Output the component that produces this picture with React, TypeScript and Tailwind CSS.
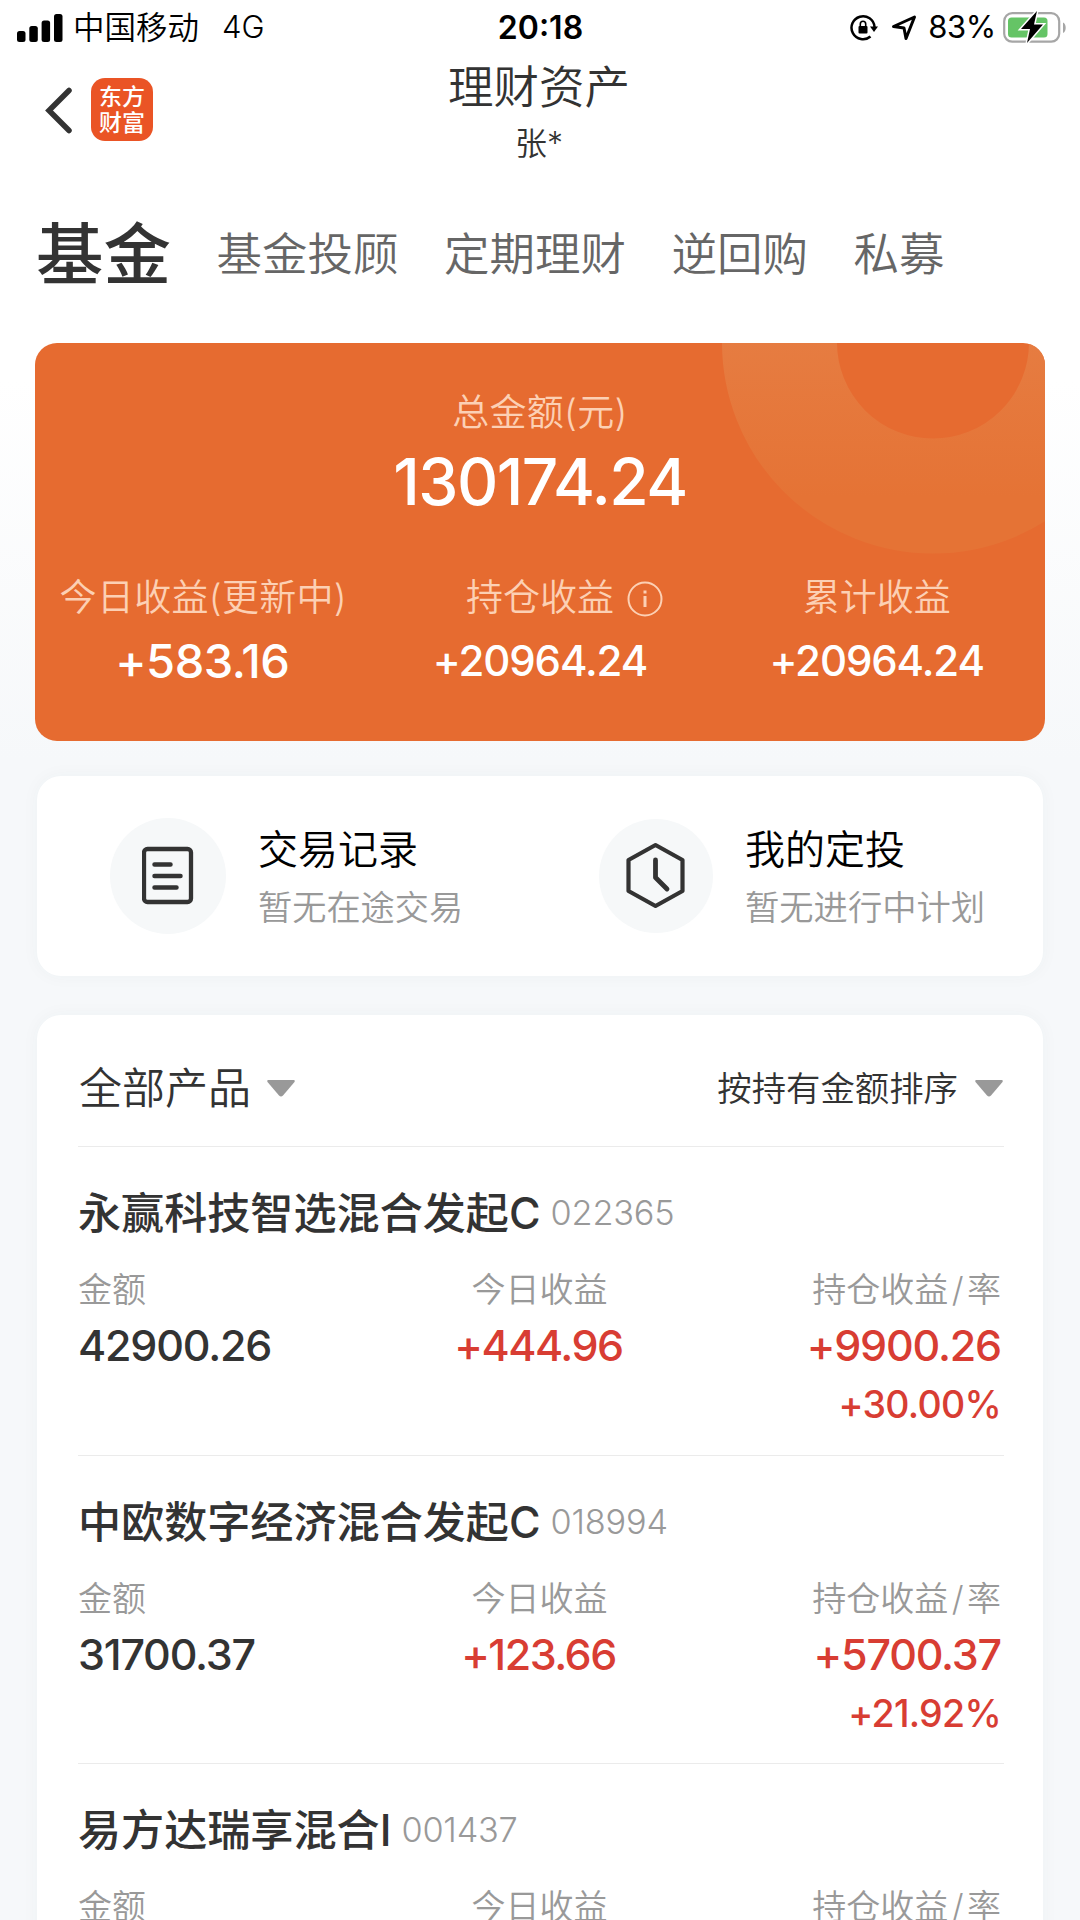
import React from "react";

interface Fund {
	name: string;
	code: string;
	amount: string;
	today: string;
	profit: string;
	rate: string;
}

const funds: Fund[] = [
	{
		name: "永赢科技智选混合发起C",
		code: "022365",
		amount: "42900.26",
		today: "+444.96",
		profit: "+9900.26",
		rate: "+30.00%",
	},
	{
		name: "中欧数字经济混合发起C",
		code: "018994",
		amount: "31700.37",
		today: "+123.66",
		profit: "+5700.37",
		rate: "+21.92%",
	},
	{
		name: "易方达瑞享混合I",
		code: "001437",
		amount: "",
		today: "",
		profit: "",
		rate: "",
	},
];

const tabs = ["基金投顾", "定期理财", "逆回购", "私募"];

function StatusBar() {
	return (
		<div className="grid h-[55px] grid-cols-3 items-center pr-[13px] pl-[17px] text-[31px] text-black">
			<div className="flex items-center">
				<svg width="46" height="30" viewBox="0 0 46 30">
					<rect x="0" y="18" width="8.5" height="11" rx="2.5" />
					<rect x="12.3" y="13" width="8.5" height="16" rx="2.5" />
					<rect x="24.6" y="7.5" width="8.5" height="21.5" rx="2.5" />
					<rect x="37" y="1" width="8.5" height="28" rx="2.5" />
				</svg>
				<span className="ml-[10px] text-[31.5px]">中国移动</span>
				<span className="ml-[23px]">4G</span>
			</div>
			<div className="pr-[3px] text-center text-[32px] font-semibold">20:18</div>
			<div className="flex items-center justify-end">
				<svg width="28" height="28" viewBox="0 0 28 28" fill="none">
					<path
						d="M20.500 22.500A11.500 11.500 0 1 1 24.500 13"
						stroke="#000"
						strokeWidth="2.5"
					/>
					<path d="M20 12.500h8l-4 5.500z" fill="#000" />
					<rect x="8.5" y="12" width="9" height="7.5" rx="1" fill="#000" />
					<path
						d="M10.300 12.500V10a2.700 2.700 0 0 1 5.400 0v2.500"
						stroke="#000"
						strokeWidth="1.6"
					/>
				</svg>
				<svg
					className="ml-[13px]"
					width="26"
					height="26"
					viewBox="0 0 26 26"
					fill="none"
				>
					<path
						d="M23.500 2 15 23.500 13 13 2.500 11.500z"
						stroke="#000"
						strokeWidth="3"
						strokeLinejoin="round"
					/>
				</svg>
				<span className="ml-[11px] font-normal tracking-[-0.3px]">83%</span>
				<svg className="ml-[7px]" width="64" height="34" viewBox="0 0 64 34">
					<rect
						x="1.2"
						y="2.2"
						width="55"
						height="28.5"
						rx="8"
						fill="#fff"
						stroke="#a6a6a6"
						strokeWidth="2.2"
					/>
					<rect x="5" y="6.5" width="39.5" height="20" rx="3.5" fill="#65c466" />
					<path d="M60 11.500c3.600 1.500 3.600 9 0 10.500z" fill="#a6a6a6" />
					<path
						d="M34 0 18 18h9l-3 14 16-18.500h-9z"
						stroke="#fff"
						strokeWidth="3"
					/>
					<path d="M34 0 18 18h9l-3 14 16-18.500h-9z" />
				</svg>
			</div>
		</div>
	);
}

function Header() {
	return (
		<div className="grid h-[115px] grid-cols-3 text-[#333]">
			<div className="flex items-start pt-[23px] pl-[45px]">
				<svg
					className="mt-[9px]"
					width="28"
					height="48"
					viewBox="0 0 28 48"
					fill="none"
				>
					<path
						d="M24 3.500 4 23.500l20 20"
						stroke="#333"
						strokeWidth="5.5"
						strokeLinecap="round"
					/>
				</svg>
				<div className="ml-[18px] flex h-[63px] w-[62px] flex-col justify-center rounded-[14px] bg-[#ea5425] text-center text-[23px] leading-[26px] font-medium text-white">
					<span>东方</span>
					<span>财富</span>
				</div>
			</div>
			<div className="flex flex-col items-center pr-[2px]">
				<span className="text-[45.5px] leading-[66px]">理财资产</span>
				<span className="text-[32px] leading-[45px]">张*</span>
			</div>
		</div>
	);
}

function Tabs() {
	return (
		<div className="flex h-[173px] items-center gap-[45.5px] pb-[3px] pl-[36px] text-[45.5px] text-[#666]">
			<span className="text-[67.5px] font-medium text-[#333]">基金</span>
			{tabs.map((tab) => (
				<span key={tab}>{tab}</span>
			))}
		</div>
	);
}

function SummaryCard() {
	return (
		<div className="relative mx-[35px] h-[398px] overflow-hidden rounded-[22px] bg-[#e66b30] text-white">
			<svg
				className="absolute top-0 right-0"
				width="340"
				height="220"
				viewBox="0 0 340 220"
				fill="none"
			>
				<defs>
					<linearGradient id="ring" x1="0" y1="0" x2="0" y2="1">
						<stop offset="0.5" stopColor="#e67c41" />
						<stop offset="1" stopColor="#e57335" />
					</linearGradient>
				</defs>
				<circle
					cx="228"
					cy="-0.5"
					r="153.5"
					stroke="url(#ring)"
					strokeWidth="115"
				/>
			</svg>
			<div className="relative flex flex-col items-center pt-[44px]">
				<span className="text-[37px] leading-[52px] tracking-[0.3px] text-[#fcd0b4]">
					总金额(元)
				</span>
				<span className="mt-[4px] text-[64px] leading-[78px] font-medium tracking-[-1.5px]">
					130174.24
				</span>
			</div>
			<div className="relative mt-[51px] grid grid-cols-3 text-center">
				<div>
					<div className="text-[37px] leading-[52px] tracking-[0.3px] text-[#fcd0b4]">
						今日收益(更新中)
					</div>
					<div className="mt-[7px] pr-[2px] text-[47px] leading-[60px] font-medium tracking-[-0.5px]">
						+583.16
					</div>
				</div>
				<div>
					<div className="text-[37px] leading-[52px] text-[#fcd0b4]">
						<span className="relative">
							持仓收益
							<svg
								className="absolute top-[6px] left-[161px]"
								width="36"
								height="36"
								viewBox="0 0 36 36"
								fill="none"
								stroke="#fcd0b4"
							>
								<circle cx="18" cy="18" r="16.5" strokeWidth="2" />
								<path d="M18 15v11M18 9.500v3" strokeWidth="3" />
							</svg>
						</span>
					</div>
					<div className="mt-[7px] text-[42px] leading-[60px] font-medium tracking-[-1.1px]">
						+20964.24
					</div>
				</div>
				<div>
					<div className="text-[37px] leading-[52px] text-[#fcd0b4]">
						累计收益
					</div>
					<div className="mt-[7px] text-[42px] leading-[60px] font-medium tracking-[-1.1px]">
						+20964.24
					</div>
				</div>
			</div>
		</div>
	);
}

function Shortcuts() {
	return (
		<div className="mx-[37px] mt-[35px] flex h-[200px] items-center rounded-[24px] bg-white pl-[73px] shadow-[0_0_18px_rgba(60,70,80,0.04)]">
			<div className="flex h-[116px] w-[116px] items-center justify-center rounded-full bg-[#f6f8f9]">
				<svg
					width="52"
					height="60"
					viewBox="0 0 52 60"
					fill="none"
					stroke="#333"
					strokeLinecap="round"
				>
					<rect
						x="2"
						y="3"
						width="47"
						height="53"
						rx="3.5"
						strokeWidth="4.3"
					/>
					<path
						d="M12.500 18.500h16M12.500 30h26M12.500 41.500h22"
						strokeWidth="4.5"
					/>
				</svg>
			</div>
			<div className="ml-[32px] w-[341px] pt-[6px]">
				<div className="text-[40px] leading-[58px] text-black">交易记录</div>
				<div className="text-[34.2px] leading-[58px] text-[#999]">
					暂无在途交易
				</div>
			</div>
			<div className="flex h-[114px] w-[114px] items-center justify-center rounded-full bg-[#f6f8f9]">
				<svg
					width="60"
					height="68"
					viewBox="0 0 60 68"
					fill="none"
					stroke="#333"
					strokeLinejoin="round"
					strokeLinecap="round"
				>
					<path
						d="M29.500 3 56.500 18v31L29.500 64 2.500 49V18z"
						strokeWidth="4.2"
					/>
					<path d="M29.500 18v17.500l11.500 11.500" strokeWidth="4.8" />
				</svg>
			</div>
			<div className="ml-[32px] pt-[6px]">
				<div className="text-[40px] leading-[58px] text-black">我的定投</div>
				<div className="text-[34.3px] leading-[58px] text-[#999]">
					暂无进行中计划
				</div>
			</div>
		</div>
	);
}

function Caret() {
	return (
		<svg width="30" height="19" viewBox="0 0 30 19">
			<path
				d="M2 1h26q1.500.5.500 2L17 16.500q-2 2-4 0L1.500 3Q.5 1.500 2 1z"
				fill="#999"
			/>
		</svg>
	);
}

function FundRow({ fund }: { fund: Fund }) {
	return (
		<div className="h-[308.5px] border-t border-[#ebebeb] pt-[36px]">
			<div className="flex items-center leading-[60px]">
				<span className="text-[43.1px] font-medium text-[#333]">
					{fund.name}
				</span>
				<span className="ml-[10px] text-[34.3px] text-[#999] tracking-[-0.2px]">
					{fund.code}
				</span>
			</div>
			<div className="mt-[23px] grid grid-cols-3 pr-[3px] text-[34px] leading-[48px] text-[#999]">
				<span>金额</span>
				<span className="text-center">今日收益</span>
				<span className="text-right">
					持仓收益<span className="px-[3.5px]">/</span>率
				</span>
			</div>
			<div className="mt-px grid grid-cols-3 pr-[3px] text-[43px] leading-[60px] font-[450] tracking-[-1.2px] text-[#d83d33]">
				<span className="text-[#333]">{fund.amount}</span>
				<span className="pr-[2px] text-center tracking-[-1.5px]">
					{fund.today}
				</span>
				<span className="text-right">{fund.profit}</span>
			</div>
			<div className="pr-[3px] text-right text-[37.5px] leading-[60px] font-[450] tracking-[-0.7px] text-[#d83d33]">
				{fund.rate}
			</div>
		</div>
	);
}

export default function App() {
	return (
		<div className="h-[1920px] w-[1080px] overflow-hidden bg-[linear-gradient(#fff_380px,#f6f8fa_760px)] font-['Inter','Noto_Sans_CJK_SC',sans-serif] font-[350]">
			<StatusBar />
			<Header />
			<Tabs />
			<SummaryCard />
			<Shortcuts />
			<div className="mx-[37px] mt-[39px] h-[940px] rounded-t-[24px] bg-white pr-[39px] pl-[41px] shadow-[0_0_18px_rgba(60,70,80,0.04)]">
				<div className="flex h-[131px] items-center justify-between pt-[16px] text-[#333]">
					<div className="flex items-center gap-[15px] pl-px text-[43px]">
						全部产品
						<Caret />
					</div>
					<div className="flex items-center gap-[16px] text-[34.4px]">
						按持有金额排序
						<Caret />
					</div>
				</div>
				{funds.map((fund) => (
					<FundRow key={fund.code} fund={fund} />
				))}
			</div>
		</div>
	);
}
